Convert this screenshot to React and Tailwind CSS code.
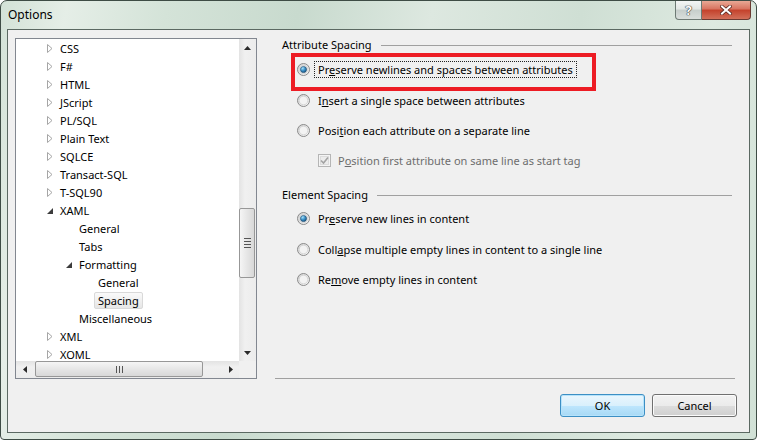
const treeItems = [
  { t: "CSS", l: 0, a: "c" },
  { t: "F#", l: 0, a: "c" },
  { t: "HTML", l: 0, a: "c" },
  { t: "JScript", l: 0, a: "c" },
  { t: "PL/SQL", l: 0, a: "c" },
  { t: "Plain Text", l: 0, a: "c" },
  { t: "SQLCE", l: 0, a: "c" },
  { t: "Transact-SQL", l: 0, a: "c" },
  { t: "T-SQL90", l: 0, a: "c" },
  { t: "XAML", l: 0, a: "e" },
  { t: "General", l: 1 },
  { t: "Tabs", l: 1 },
  { t: "Formatting", l: 1, a: "e" },
  { t: "General", l: 2 },
  { t: "Spacing", l: 2, sel: true },
  { t: "Miscellaneous", l: 1 },
  { t: "XML", l: 0, a: "c" },
  { t: "XOML", l: 0, a: "c" },
];

const indent = { 0: "pl-[24px]", 1: "pl-[43px]", 2: "pl-[62px]" };

function Arrow({ kind }) {
  if (kind === "c") {
    return (
      <svg width="6" height="9" viewBox="0 0 6 9" className="ml-[7px]">
        <path d="M0.5 0.5 L5 4.5 L0.5 8.5 Z" fill="#fff" stroke="#a6a6a6" />
      </svg>
    );
  }
  if (kind === "e") {
    return (
      <svg width="6" height="6" viewBox="0 0 6 6" className="ml-[7px] mt-[1px]">
        <path d="M6 0 L6 6 L0 6 Z" fill="#3c3c3c" />
      </svg>
    );
  }
  return null;
}

function Radio({ checked }) {
  return (
    <svg width="13" height="13" viewBox="0 0 13 13" className="shrink-0">
      <defs>
        <linearGradient id="rbg" x1="0" y1="0" x2="1" y2="1">
          <stop offset="0" stopColor="#d0d0d0" />
          <stop offset="1" stopColor="#fbfbfb" />
        </linearGradient>
        <radialGradient id="rdot" cx="0.35" cy="0.3" r="0.8">
          <stop offset="0" stopColor="#a6e1fb" />
          <stop offset="0.5" stopColor="#3a8fc6" />
          <stop offset="1" stopColor="#0f4a78" />
        </radialGradient>
      </defs>
      <circle cx="6.5" cy="6.5" r="6" fill="url(#rbg)" stroke="#8b8b8b" />
      <circle cx="6.5" cy="6.5" r="4.3" fill="#f3f3f3" stroke="#cfcfcf" strokeWidth="0.8" />
      {checked && (
        <circle cx="6.5" cy="6.5" r="3.1" fill="url(#rdot)" stroke="#1d4466" strokeWidth="0.6" />
      )}
    </svg>
  );
}

function DisabledCheck() {
  return (
    <svg width="13" height="13" viewBox="0 0 13 13" className="shrink-0">
      <rect x="0.5" y="0.5" width="12" height="12" fill="#f4f4f4" stroke="#b5b5b5" />
      <rect x="2.5" y="2.5" width="8" height="8" fill="#ececec" stroke="#dcdcdc" />
      <path d="M3 6.5 L5.5 9 L10 3.5" fill="none" stroke="#a3a3a3" strokeWidth="1.6" />
    </svg>
  );
}

function Label({ children, focus, muted }) {
  return (
    <span
      className={`px-[3px] leading-[15px] border whitespace-nowrap ${
        focus ? "border-dotted border-[#222]" : "border-transparent"
      } ${muted ? "text-[#6d6d6d]" : "text-black"}`}
    >
      {children}
    </span>
  );
}

function GroupHeader({ children, className }) {
  return (
    <div className={`h-[16px] flex items-center gap-[9px] pl-[7px] pr-[3px] ${className}`}>
      <span className="leading-[16px] whitespace-nowrap">{children}</span>
      <div className="flex-1 h-px bg-[#a0a0a0]" />
    </div>
  );
}

function ScrollArrow({ dir }) {
  const d = {
    up: "M3.5 0 L7 4 L0 4 Z",
    down: "M0 0 L7 0 L3.5 4 Z",
    left: "M4 0 L4 7 L0 3.5 Z",
    right: "M0 0 L4 3.5 L0 7 Z",
  }[dir];
  const vert = dir === "up" || dir === "down";
  return (
    <svg width={vert ? 7 : 4} height={vert ? 4 : 7} viewBox={vert ? "0 0 7 4" : "0 0 4 7"}>
      <path d={d} fill="#2a2a2a" />
    </svg>
  );
}

function Tree() {
  return (
    <div className="mt-[8px] w-[242px] h-[341px] shrink-0 border border-[#828790] bg-white flex flex-col">
      <div className="h-[322px] flex">
        <div className="w-[223px] overflow-hidden">
          {treeItems.map((it, i) => (
            <div key={i} className={`h-[18px] flex items-center ${indent[it.l]}`}>
              <span className="w-[16px] h-[18px] flex items-center">
                <Arrow kind={it.a} />
              </span>
              <span
                className={`px-[3px] leading-[15px] border rounded-[2px] whitespace-nowrap ${
                  it.sel
                    ? "border-[#d9d9d9] bg-[linear-gradient(180deg,#fafafa,#e6e6e6)]"
                    : "border-transparent"
                }`}
              >
                {it.t}
              </span>
            </div>
          ))}
        </div>
        <div className="w-[17px] flex flex-col bg-[linear-gradient(90deg,#e3e3e3,#f0f0f0_35%,#ececec)]">
          <div className="h-[17px] flex items-center justify-center">
            <ScrollArrow dir="up" />
          </div>
          <div className="mt-[152px] mr-[1px] h-[70px] rounded-[2px] border border-[#979797] bg-[linear-gradient(90deg,#f5f5f5,#e6e6e6_50%,#d8d8d8)] flex flex-col items-center justify-center gap-[2px]">
            <div className="w-[7px] h-px bg-[#555]" />
            <div className="w-[7px] h-px bg-[#555]" />
            <div className="w-[7px] h-px bg-[#555]" />
            <div className="w-[7px] h-px bg-[#555]" />
          </div>
          <div className="flex-1" />
          <div className="h-[17px] flex items-center justify-center">
            <ScrollArrow dir="down" />
          </div>
        </div>
      </div>
      <div className="h-[17px] flex">
        <div className="w-[223px] flex bg-[linear-gradient(180deg,#e3e3e3,#f0f0f0_35%,#ececec)]">
          <div className="w-[17px] flex items-center justify-center">
            <ScrollArrow dir="left" />
          </div>
          <div className="ml-[2px] mb-[1px] w-[168px] rounded-[2px] border border-[#979797] bg-[linear-gradient(180deg,#f5f5f5,#e6e6e6_50%,#d8d8d8)] flex items-center justify-center gap-[2px]">
            <div className="w-px h-[7px] bg-[#555]" />
            <div className="w-px h-[7px] bg-[#555]" />
            <div className="w-px h-[7px] bg-[#555]" />
          </div>
          <div className="flex-1" />
          <div className="w-[17px] flex items-center justify-center">
            <ScrollArrow dir="right" />
          </div>
        </div>
        <div className="w-[17px] bg-[#f0f0f0]" />
      </div>
    </div>
  );
}

function RadioRow({ checked, focus, className, children }) {
  return (
    <div className={`h-[17px] flex items-center pl-[22px] gap-[4px] ${className}`}>
      <Radio checked={checked} />
      <Label focus={focus}>{children}</Label>
    </div>
  );
}

function RightPane() {
  return (
    <div className="relative ml-[18px] flex-1 flex flex-col">
      <GroupHeader className="mt-[7px]">Attribute Spacing</GroupHeader>
      <RadioRow checked focus className="mt-[8px]">
        Pr<u>e</u>serve newlines and spaces between attributes
      </RadioRow>
      <RadioRow className="mt-[14px]">
        I<u>n</u>sert a single space between attributes
      </RadioRow>
      <RadioRow className="mt-[13px]">
        Posi<u>t</u>ion each attribute on a separate line
      </RadioRow>
      <div className="mt-[13px] h-[17px] flex items-center pl-[43px] gap-[3px]">
        <DisabledCheck />
        <Label muted>
          P<u>o</u>sition first attribute on same line as start tag
        </Label>
      </div>
      <GroupHeader className="mt-[18px]">Element Spacing</GroupHeader>
      <RadioRow checked className="mt-[7px]">
        Pr<u>e</u>serve new lines in content
      </RadioRow>
      <RadioRow className="mt-[14px]">
        Coll<u>a</u>pse multiple empty lines in content to a single line
      </RadioRow>
      <RadioRow className="mt-[13px]">
        Re<u>m</u>ove empty lines in content
      </RadioRow>

      <div className="mt-auto h-px bg-[#a0a0a0]" />
      <div className="mt-[15px] mb-[15px] -mr-[2px] flex justify-end gap-[7px]">
        <button className="w-[85px] h-[23px] rounded-[3px] border border-[#3c8fc4] bg-[linear-gradient(180deg,#eaf6fd,#d9f0fc_50%,#bee6fd_51%,#a7d9f5)] shadow-[inset_0_0_0_1px_#b6e3fb] text-black leading-[21px]">
          OK
        </button>
        <button className="w-[85px] h-[23px] rounded-[3px] border border-[#707070] bg-[linear-gradient(180deg,#f2f2f2,#ebebeb_50%,#dddddd_51%,#cfcfcf)] shadow-[inset_0_0_0_1px_#fbfbfb] text-black leading-[21px]">
          Cancel
        </button>
      </div>

      {/* red highlight annotation */}
      <div className="absolute left-[16px] top-[23px] w-[305px] h-[38px] border-[4px] border-[#ed1c24] pointer-events-none" />
    </div>
  );
}

export default function App() {
  return (
    <div className="w-[757px] h-[440px] flex flex-col overflow-hidden rounded-t-[7px] rounded-b-[4px] border border-[#3e4c45] px-[6px] bg-[linear-gradient(100deg,#d3e2d7_0%,#e5eee7_8%,#d4e3d8_20%,#c8dace_36%,#dde8e0_52%,#cfdfd4_70%,#dde9e0_86%,#d1e1d6_100%)] font-['Noto_Sans',sans-serif] text-[11px] text-black">
      {/* TITLE BAR */}
      <div className="h-[28px] shrink-0 flex items-start">
        <div className="pl-[1px] pt-[6px] text-[12px] leading-[16px]">Options</div>
        <div className="ml-auto -mr-[1px] flex">
          <div className="w-[27px] h-[19px] rounded-bl-[4px] border border-t-0 border-[#6d7a74] bg-[linear-gradient(180deg,#f4f6f5,#e2e7e4_45%,#c6cecb_50%,#d9dfdc)] flex items-center justify-center">
            <span className="text-[13px] font-bold leading-none text-white [text-shadow:0_0_1px_#333,0_0_1px_#333,0_0_1px_#333]">
              ?
            </span>
          </div>
          <div className="w-[49px] h-[19px] rounded-br-[4px] border border-t-0 border-l-0 border-[#6b3a32] bg-[linear-gradient(180deg,#e9a895,#d8735f_45%,#c4412b_50%,#d2705a)] flex items-center justify-center">
            <svg width="12" height="10" viewBox="0 0 12 10">
              <path d="M2 1.5 L10 8.5 M10 1.5 L2 8.5" stroke="#5a2a22" strokeWidth="3.6" strokeLinecap="square" />
              <path d="M2 1.5 L10 8.5 M10 1.5 L2 8.5" stroke="#fff" strokeWidth="2" strokeLinecap="square" />
            </svg>
          </div>
        </div>
      </div>

      {/* CLIENT AREA */}
      <div className="h-[404px] shrink-0 border border-[#5b6962] bg-[#f0f0f0] flex pl-[7px] pr-[14px]">
        <Tree />
        <RightPane />
      </div>
    </div>
  );
}
